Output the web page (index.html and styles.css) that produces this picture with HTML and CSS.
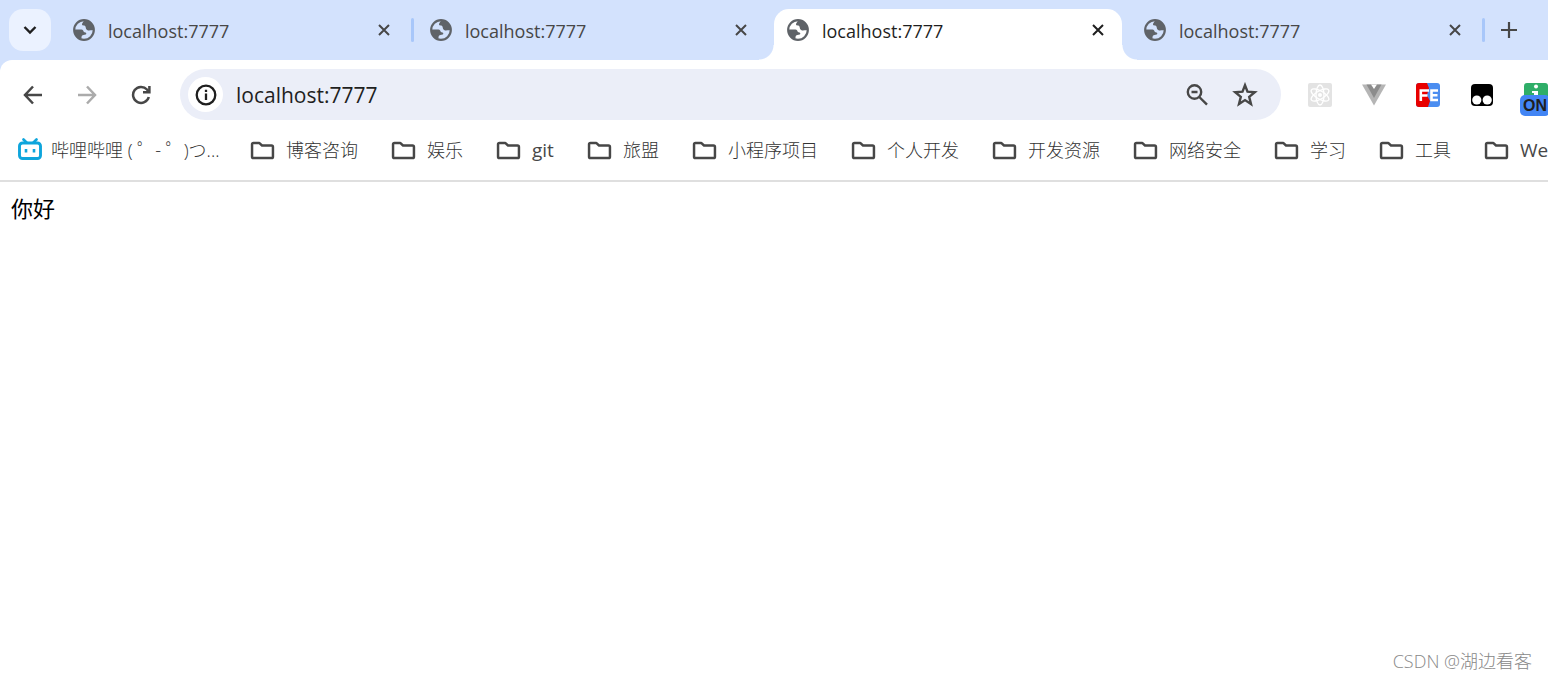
FILE: index.html
```html
<!DOCTYPE html>
<html lang="zh-CN">
<head>
    <meta charset="UTF-8">
    <title>localhost:7777</title>
    <meta name="viewport" content="width=device-width, initial-scale=1">
    <link rel="stylesheet" href="styles.css">
</head>
<body>
<!-- shared icons -->
<svg class="sprite" aria-hidden="true">
    <symbol id="globe" viewBox="0 0 22 22">
        <circle cx="11" cy="11" r="9.8" fill="none" stroke="currentColor" stroke-width="2.2"/>
        <path fill="currentColor" d="M11 1C10.800 3 8.800 4 9 5.600C9.300 7 12 6 12.600 7.800C12.900 9.300 13 11 15 11.400C17 11.700 19 10.800 21 11.500A10 10 0 0 0 11 1z"/>
        <path fill="currentColor" d="M1.500 10.500H7C9 10.500 10.300 10.800 10.500 12.300C10.800 13.800 13.500 13 13.300 14.800C13 16.300 9.500 15.500 8.800 17C8.400 18 8.500 19 8.500 20.500A10 10 0 0 1 1.500 10.500z"/>
    </symbol>
    <symbol id="close" viewBox="0 0 12 12">
        <path d="M1 1l10 10M11 1L1 11" stroke="currentColor" stroke-width="2" fill="none"/>
    </symbol>
    <symbol id="folder" viewBox="0 0 26 20">
        <path d="M3.500 2H9.500L12.500 4.700H22.500Q24 4.700 24 6.200V16.500Q24 18 22.500 18H3.500Q2 18 2 16.500V3.500Q2 2 3.500 2z" fill="none" stroke="currentColor" stroke-width="2.600" stroke-linejoin="round"/>
    </symbol>
</svg>

<header class="browser">
    <div class="tab-strip">
        <button class="tab-search" aria-label="Search tabs">
            <svg width="14" height="10" viewBox="0 0 14 10"><path d="M1.500 2L7 7.500L12.500 2" fill="none" stroke="currentColor" stroke-width="2.400"/></svg>
        </button>
        <div class="tab">
            <button class="tab-title"><svg class="favicon"><use href="#globe"/></svg><span>localhost:7777</span></button>
            <button class="tab-close" aria-label="Close"><svg width="12" height="12"><use href="#close"/></svg></button>
        </div>
        <span class="divider"></span>
        <div class="tab">
            <button class="tab-title"><svg class="favicon"><use href="#globe"/></svg><span>localhost:7777</span></button>
            <button class="tab-close" aria-label="Close"><svg width="12" height="12"><use href="#close"/></svg></button>
        </div>
        <span class="divider hidden"></span>
        <div class="tab active">
            <button class="tab-title"><svg class="favicon"><use href="#globe"/></svg><span>localhost:7777</span></button>
            <button class="tab-close" aria-label="Close"><svg width="12" height="12"><use href="#close"/></svg></button>
        </div>
        <span class="divider hidden"></span>
        <div class="tab">
            <button class="tab-title"><svg class="favicon"><use href="#globe"/></svg><span>localhost:7777</span></button>
            <button class="tab-close" aria-label="Close"><svg width="12" height="12"><use href="#close"/></svg></button>
        </div>
        <span class="divider"></span>
        <button class="new-tab" aria-label="New tab">
            <svg width="16" height="16" viewBox="0 0 16 16"><path d="M8 0V16M0 8H16" stroke="currentColor" stroke-width="2.200"/></svg>
        </button>
    </div>

    <div class="toolbar">
        <div class="nav">
            <button aria-label="Back">
                <svg width="20" height="20" viewBox="0 0 20 20"><path d="M19 10H3M10 1.500L2 10L10 18.500" fill="none" stroke="currentColor" stroke-width="2.500"/></svg>
            </button>
            <button aria-label="Forward" disabled>
                <svg width="20" height="20" viewBox="0 0 20 20"><path d="M1 10H17M10 1.500L18 10L10 18.500" fill="none" stroke="currentColor" stroke-width="2.500"/></svg>
            </button>
            <button aria-label="Reload">
                <svg width="20" height="20" viewBox="0 0 20 20"><path d="M17.800 12A8 8 0 1 1 16 4.500L17.500 6.500" fill="none" stroke="currentColor" stroke-width="2.500"/><path d="M18.400 1V7.300H12" fill="none" stroke="currentColor" stroke-width="2.500"/></svg>
            </button>
        </div>
        <div class="omnibox">
            <button class="site-info" aria-label="View site information">
                <svg width="22" height="22" viewBox="0 0 22 22"><circle cx="11" cy="11" r="9.300" fill="none" stroke="currentColor" stroke-width="2.300"/><path d="M11 9.500V16M11 5.800V8" stroke="currentColor" stroke-width="2.300"/></svg>
            </button>
            <input class="address" type="text" value="localhost:7777" aria-label="Address">
            <button class="omni-btn" aria-label="Zoom">
                <svg width="24" height="24" viewBox="0 0 24 24"><circle cx="9.500" cy="9" r="6.700" fill="none" stroke="currentColor" stroke-width="2.400"/><path d="M6.500 9H12.500M14.300 14L22 21.700" stroke="currentColor" stroke-width="2.400"/></svg>
            </button>
            <button class="omni-btn" aria-label="Bookmark this page">
                <svg width="26" height="26" viewBox="0 0 26 26"><path d="M13 3.200L15.500 9.700L22.800 10.200L17.200 14.900L19 22L13 18.100L7 22L8.800 14.900L3.200 10.200L10.500 9.700z" fill="none" stroke="currentColor" stroke-width="2.400"/></svg>
            </button>
        </div>
        <div class="extensions">
            <button aria-label="React Developer Tools">
                <svg width="24" height="24" viewBox="0 0 24 24">
                    <rect width="24" height="24" rx="2" fill="#e3e3e3"/>
                    <g fill="none" stroke="#fff" stroke-width="1.300">
                        <ellipse cx="12" cy="12" rx="4" ry="10"/>
                        <ellipse cx="12" cy="12" rx="4" ry="10" transform="rotate(60 12 12)"/>
                        <ellipse cx="12" cy="12" rx="4" ry="10" transform="rotate(120 12 12)"/>
                    </g>
                    <circle cx="12" cy="12" r="2" fill="#fff"/>
                </svg>
            </button>
            <button aria-label="Vue.js devtools">
                <svg width="24" height="24" viewBox="0 0 24 24"><path d="M0 1.500H24L12 22.500z" fill="#b5b5b5"/><path d="M4.500 1.500H19.500L12 15z" fill="#8c8c8c"/><path d="M9 1.500H15L12 6z" fill="#fff"/></svg>
            </button>
            <button aria-label="FeHelper">
                <svg width="24" height="24" viewBox="0 0 24 24">
                    <rect width="24" height="24" rx="3" fill="#4b8df0"/>
                    <path d="M3 0H11L13 5L11 12L14 18L12 24H3Q0 24 0 21V3Q0 0 3 0z" fill="#e80000"/>
                    <path d="M4.800 18V7.500H13M4.800 12.500H11.500M22 7.500H15.500V17H22M15.500 12.300H21.500" fill="none" stroke="#fff" stroke-width="2.600"/>
                </svg>
            </button>
            <button aria-label="Tampermonkey">
                <svg width="24" height="24" viewBox="0 0 24 24"><rect x="1" y="1" width="22" height="22" rx="4" fill="#000"/><circle cx="6.800" cy="17" r="4.600" fill="#fff"/><circle cx="17.200" cy="17" r="4.600" fill="#fff"/></svg>
            </button>
            <button class="with-badge" aria-label="Proxy">
                <svg width="24" height="24" viewBox="0 0 24 24"><rect width="24" height="24" rx="3" fill="#2fae68"/><path d="M8 8H14V12H10V10H8z" fill="#fff"/><circle cx="12" cy="3.500" r="2" fill="#fff"/></svg>
                <span class="badge">ON</span>
            </button>
        </div>
    </div>

    <nav class="bookmarks">
        <a class="bookmark bili" href="#">
            <svg class="bili-icon" width="24" height="24" viewBox="0 0 24 24"><rect x="1.500" y="5" width="21" height="15.500" rx="3" fill="none" stroke="currentColor" stroke-width="2.900"/><path d="M5.500 1.500L8.500 4.500M18.500 1.500L15.500 4.500" stroke="currentColor" stroke-width="2.600" stroke-linecap="round"/><path d="M8 11V14.500M16 11V14.500" stroke="currentColor" stroke-width="2.600"/></svg>
            <span>哔哩哔哩 ( ゜- ゜)つ...</span>
        </a>
        <a class="bookmark" href="#"><svg class="folder"><use href="#folder"/></svg>博客咨询</a>
        <a class="bookmark" href="#"><svg class="folder"><use href="#folder"/></svg>娱乐</a>
        <a class="bookmark latin" href="#"><svg class="folder"><use href="#folder"/></svg>git</a>
        <a class="bookmark" href="#"><svg class="folder"><use href="#folder"/></svg>旅盟</a>
        <a class="bookmark" href="#"><svg class="folder"><use href="#folder"/></svg>小程序项目</a>
        <a class="bookmark" href="#"><svg class="folder"><use href="#folder"/></svg>个人开发</a>
        <a class="bookmark" href="#"><svg class="folder"><use href="#folder"/></svg>开发资源</a>
        <a class="bookmark" href="#"><svg class="folder"><use href="#folder"/></svg>网络安全</a>
        <a class="bookmark" href="#"><svg class="folder"><use href="#folder"/></svg>学习</a>
        <a class="bookmark" href="#"><svg class="folder"><use href="#folder"/></svg>工具</a>
        <a class="bookmark latin" href="#"><svg class="folder"><use href="#folder"/></svg>We</a>
    </nav>
</header>

<main class="page">你好</main>
<footer class="watermark">CSDN @湖边看客</footer>
</body>
</html>
```

FILE: styles.css
```css
* { box-sizing: border-box; }
body {
    margin: 0;
    min-height: 100vh;
    display: flex;
    flex-direction: column;
    overflow-x: hidden;
    background: #fff;
    color: #474747;
    font-family: "Open Sans", "Noto Sans CJK SC", sans-serif;
    font-size: 18px;
}
button {
    padding: 0;
    border: none;
    background: none;
    color: inherit;
    font: inherit;
    display: flex;
    align-items: center;
    justify-content: center;
    flex-shrink: 0;
}
svg { display: block; flex-shrink: 0; }
.sprite { position: absolute; width: 0; height: 0; }
.browser { border-bottom: 2px solid #dfdfdf; background: #d3e2fd; }

/* tabs */
.tab-strip {
    display: flex;
    align-items: center;
    height: 60px;
    padding-left: 9px;
}
.tab-search {
    width: 42px;
    height: 42px;
    margin-right: 9px;
    border-radius: 14px;
    background: #ebf2ff;
    color: #1f1f1f;
}
.tab {
    position: relative;
    display: flex;
    align-items: center;
    flex: 0 1 348px;
    height: 42px;
    padding: 0 12px 0 13px;
}
.tab-title { flex: 1; justify-content: flex-start; gap: 13px; }
.tab-title span { padding-top: 2px; }
.favicon { width: 22px; height: 22px; color: #5f6368; }
.tab-close { width: 24px; height: 24px; }
.tab.active {
    align-self: flex-end;
    height: 51px;
    padding-bottom: 9px;
    border-radius: 15px 15px 0 0;
    background: #fff;
    color: #1f1f1f;
}
.tab.active::before, .tab.active::after {
    content: "";
    position: absolute;
    bottom: 0;
    width: 15px;
    height: 15px;
}
.tab.active::before { right: 100%; background: radial-gradient(circle at 0 0, transparent 14px, #fff 15px); }
.tab.active::after { left: 100%; background: radial-gradient(circle at 100% 0, transparent 14px, #fff 15px); }
.divider { width: 3px; height: 24px; margin: 0 3px; border-radius: 2px; background: #a8c7fa; }
.divider.hidden { visibility: hidden; }
.new-tab { width: 42px; height: 42px; }

/* toolbar */
.toolbar {
    display: flex;
    align-items: center;
    height: 69px;
    padding-left: 12px;
    border-radius: 12px 0 0 0;
    background: #fff;
    overflow: hidden;
}
.nav { display: flex; gap: 12px; margin-right: 18px; }
.nav button { width: 42px; height: 42px; }
.nav button:disabled { color: #ababab; }
.omnibox {
    display: flex;
    align-items: center;
    flex: 1;
    min-width: 0;
    height: 51px;
    padding: 0 15px 0 8px;
    border-radius: 26px;
    background: #ebeef8;
}
.site-info { width: 35px; height: 35px; border-radius: 50%; background: #fff; color: #1f1f1f; }
.address {
    flex: 1;
    min-width: 0;
    padding: 0 0 0 13px;
    border: none;
    outline: none;
    background: none;
    color: #1f1f1f;
    font: inherit;
    font-size: 21px;
}
.omni-btn { width: 42px; height: 42px; margin-left: 6px; }
.extensions { display: flex; gap: 30px; padding-left: 27px; }
.with-badge { position: relative; }
.badge {
    position: absolute;
    top: 12px;
    left: -4px;
    padding: 0 3px;
    border-radius: 5px;
    background: #4285f4;
    color: #1f1f1f;
    font-family: "Liberation Sans", sans-serif;
    font-size: 16px;
    font-weight: 700;
    line-height: 21px;
}

/* bookmarks */
.bookmarks {
    display: flex;
    gap: 33px;
    height: 51px;
    padding-left: 18px;
    background: #fff;
    overflow: hidden;
}
.bookmark {
    display: flex;
    align-items: center;
    gap: 11px;
    flex-shrink: 0;
    height: 42px;
    color: #333;
    font-weight: 300;
    line-height: 24px;
    text-decoration: none;
    white-space: nowrap;
}
.latin { color: inherit; font-size: 19px; font-weight: 400; }
.folder { width: 25px; height: 19px; color: #474747; }
.bili { gap: 9px; }
.bili span { width: 166px; }
.bili-icon { color: #0ea5dc; }

/* page */
.page { flex: 1; padding: 10px 11px; color: #000; font-size: 22px; line-height: 32px; }
.watermark { padding: 0 16px 6px; color: #888; font-size: 18px; line-height: 24px; text-align: right; font-weight: 300; }
```
